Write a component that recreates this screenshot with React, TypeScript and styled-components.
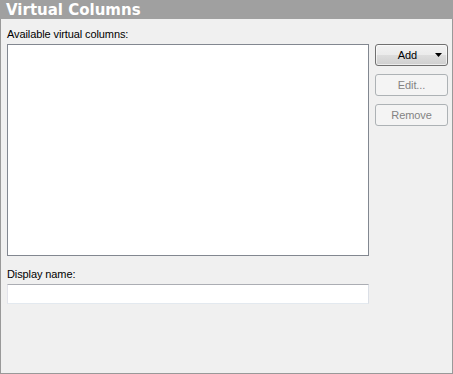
import * as React from "react";
import styled, { createGlobalStyle } from "styled-components";

const GlobalStyle = createGlobalStyle`
  html, body {
    margin: 0;
    padding: 0;
    background: #f0f0f0;
  }
  * {
    box-sizing: border-box;
  }
`;

const Panel = styled.div`
  width: 453px;
  height: 374px;
  display: flex;
  flex-direction: column;
  font-family: "Liberation Sans", Arial, sans-serif;
  font-size: 11px;
  color: #000;
`;

const PanelHeader = styled.div`
  height: 19px;
  flex: none;
  padding: 1px 0 0 6px;
  background-color: #a0a0a0;
  color: #fff;
  font-family: "DejaVu Sans", Verdana, sans-serif;
  font-weight: bold;
  font-size: 15px;
  line-height: 18px;
  white-space: nowrap;
`;

const PanelBody = styled.div`
  flex: 1;
  display: flex;
  gap: 6px;
  padding: 8px 0 0 6px;
  background-color: #f0f0f0;
  border: 1px solid #999;
  border-top: none;
`;

const MainColumn = styled.div`
  width: 362px;
  display: flex;
  flex-direction: column;
`;

const SideColumn = styled.div`
  width: 73px;
  display: flex;
  flex-direction: column;
  gap: 8px;
  padding-top: 17px;
`;

const FieldLabel = styled.label<{ $spaced?: boolean }>`
  display: block;
  line-height: 14px;
  letter-spacing: -0.1px;
  margin-top: ${(p) => (p.$spaced ? "11px" : "0")};
  margin-bottom: 3px;
  white-space: nowrap;
`;

const ListBox = styled.div`
  height: 212px;
  background-color: #fff;
  border: 1px solid #828790;
`;

const TextBox = styled.input`
  height: 20px;
  width: 100%;
  margin: 0;
  padding: 0 3px;
  background-color: #fff;
  border: 1px solid #e3e9ef;
  border-top-color: #abadb3;
  border-left-color: #e2e3ea;
  border-right-color: #dbdfe6;
  font: inherit;
  outline: none;
`;

const ActionButton = styled.button`
  height: 22px;
  width: 100%;
  margin: 0;
  padding: 0;
  border-radius: 3px;
  font-family: "Liberation Sans", Arial, sans-serif;
  font-size: 11px;
  letter-spacing: -0.1px;
  display: flex;
  align-items: center;
  justify-content: center;
  border: 1px solid #707070;
  color: #000;
  background: linear-gradient(
    to bottom,
    #f2f2f2 0%,
    #ebebeb 50%,
    #dddddd 51%,
    #cfcfcf 100%
  );
  box-shadow: inset 0 0 0 1px rgba(255, 255, 255, 0.6);

  &:disabled {
    border-color: #adb2b5;
    background: #f4f4f4;
    color: #838383;
    box-shadow: none;
  }
`;

const SplitButton = styled(ActionButton)`
  justify-content: flex-end;
  gap: 18px;
  padding-right: 5px;
`;

const DropArrow = styled.svg`
  width: 7px;
  height: 4px;
  flex: none;
`;

export default function App() {
  return (
    <>
      <GlobalStyle />
      <Panel>
        <PanelHeader>Virtual Columns</PanelHeader>
        <PanelBody>
          <MainColumn>
            <FieldLabel>Available virtual columns:</FieldLabel>
            <ListBox />
            <FieldLabel $spaced>Display name:</FieldLabel>
            <TextBox type="text" />
          </MainColumn>
          <SideColumn>
            <SplitButton type="button">
              <span>Add</span>
              <DropArrow viewBox="0 0 7 4">
                <path d="M0 0H7L3.5 4Z" fill="#000" />
              </DropArrow>
            </SplitButton>
            <ActionButton type="button" disabled>
              Edit...
            </ActionButton>
            <ActionButton type="button" disabled>
              Remove
            </ActionButton>
          </SideColumn>
        </PanelBody>
      </Panel>
    </>
  );
}
